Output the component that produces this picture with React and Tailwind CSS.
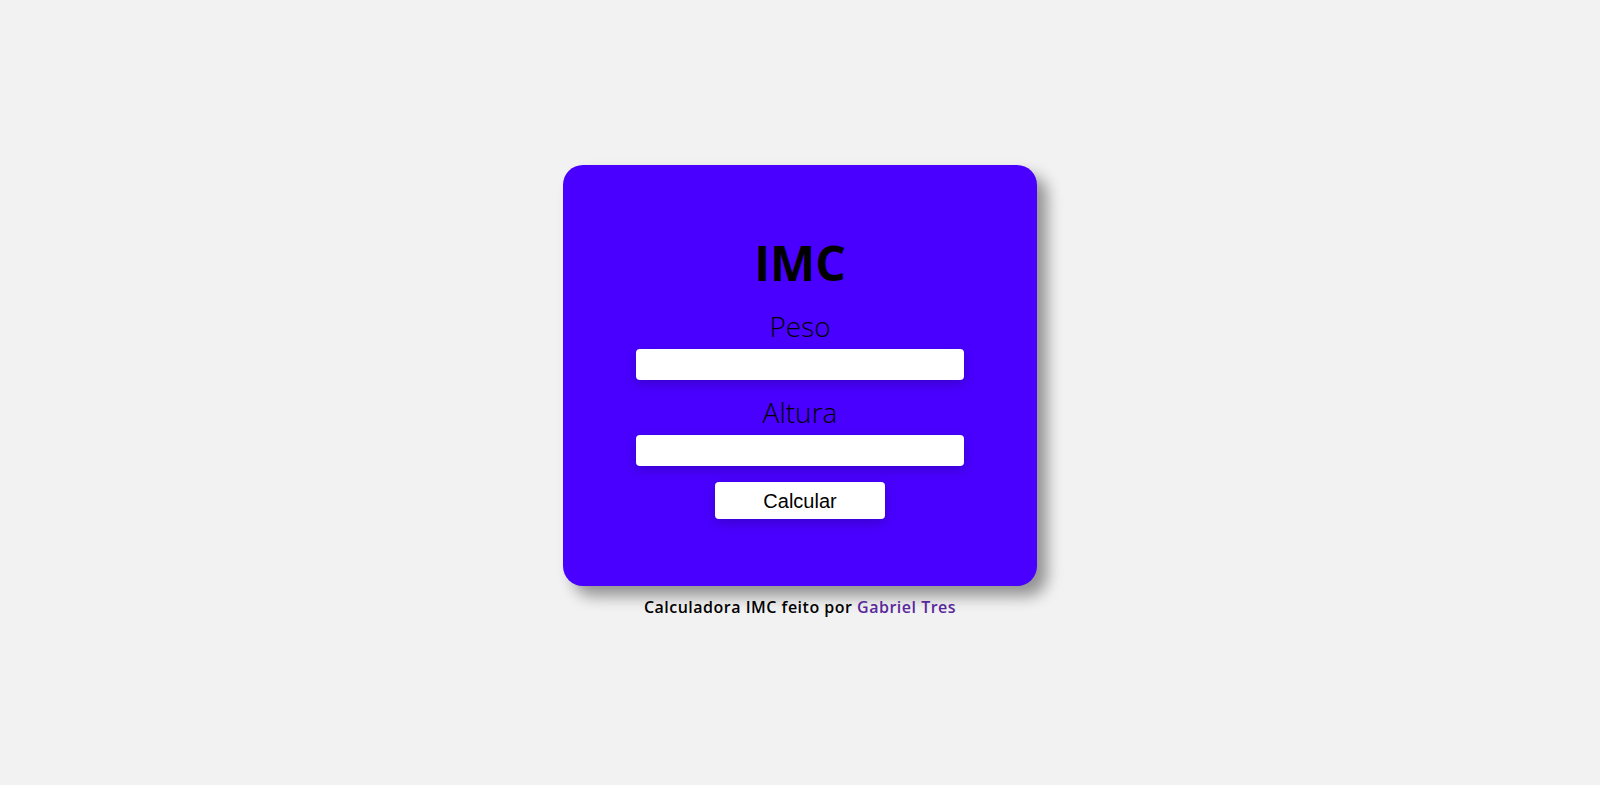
export default function App() {
  return (
    <div
      className="min-h-screen bg-[#f2f2f2] flex flex-col items-center justify-center pb-[2px]"
      style={{ fontFamily: '"Open Sans", "Noto Sans", sans-serif' }}
    >
      <div className="w-[474px] h-[421px] bg-[#4900ff] rounded-[20px] shadow-[10px_10px_15px_rgba(0,0,0,0.4)] flex flex-col items-center pt-[70px]">
        <h1 className="text-[48px] leading-[56px] font-bold text-black">IMC</h1>
        <label className="mt-[17px] text-[28px] leading-[36px] font-light text-black">Peso</label>
        <input
          type="text"
          className="mt-[5px] w-[328px] h-[31px] rounded-[4px] bg-white outline-none shadow-[0_4px_12px_rgba(0,0,0,0.2)]"
        />
        <label className="mt-[14px] text-[28px] leading-[36px] font-light text-black">Altura</label>
        <input
          type="text"
          className="mt-[5px] w-[328px] h-[31px] rounded-[4px] bg-white outline-none shadow-[0_4px_12px_rgba(0,0,0,0.2)]"
        />
        <button
          className="mt-[16px] w-[170px] h-[37px] rounded-[4px] bg-white text-black text-[20px] shadow-[0_4px_12px_rgba(0,0,0,0.2)]"
          style={{ fontFamily: '"Liberation Sans", Arial, sans-serif' }}
        >
          Calcular
        </button>
      </div>
      <p className="mt-[10px] text-[16px] leading-[22px] tracking-[0.5px] font-semibold text-black">
        Calculadora IMC feito por <span className="text-[#58279b]">Gabriel Tres</span>
      </p>
    </div>
  );
}
